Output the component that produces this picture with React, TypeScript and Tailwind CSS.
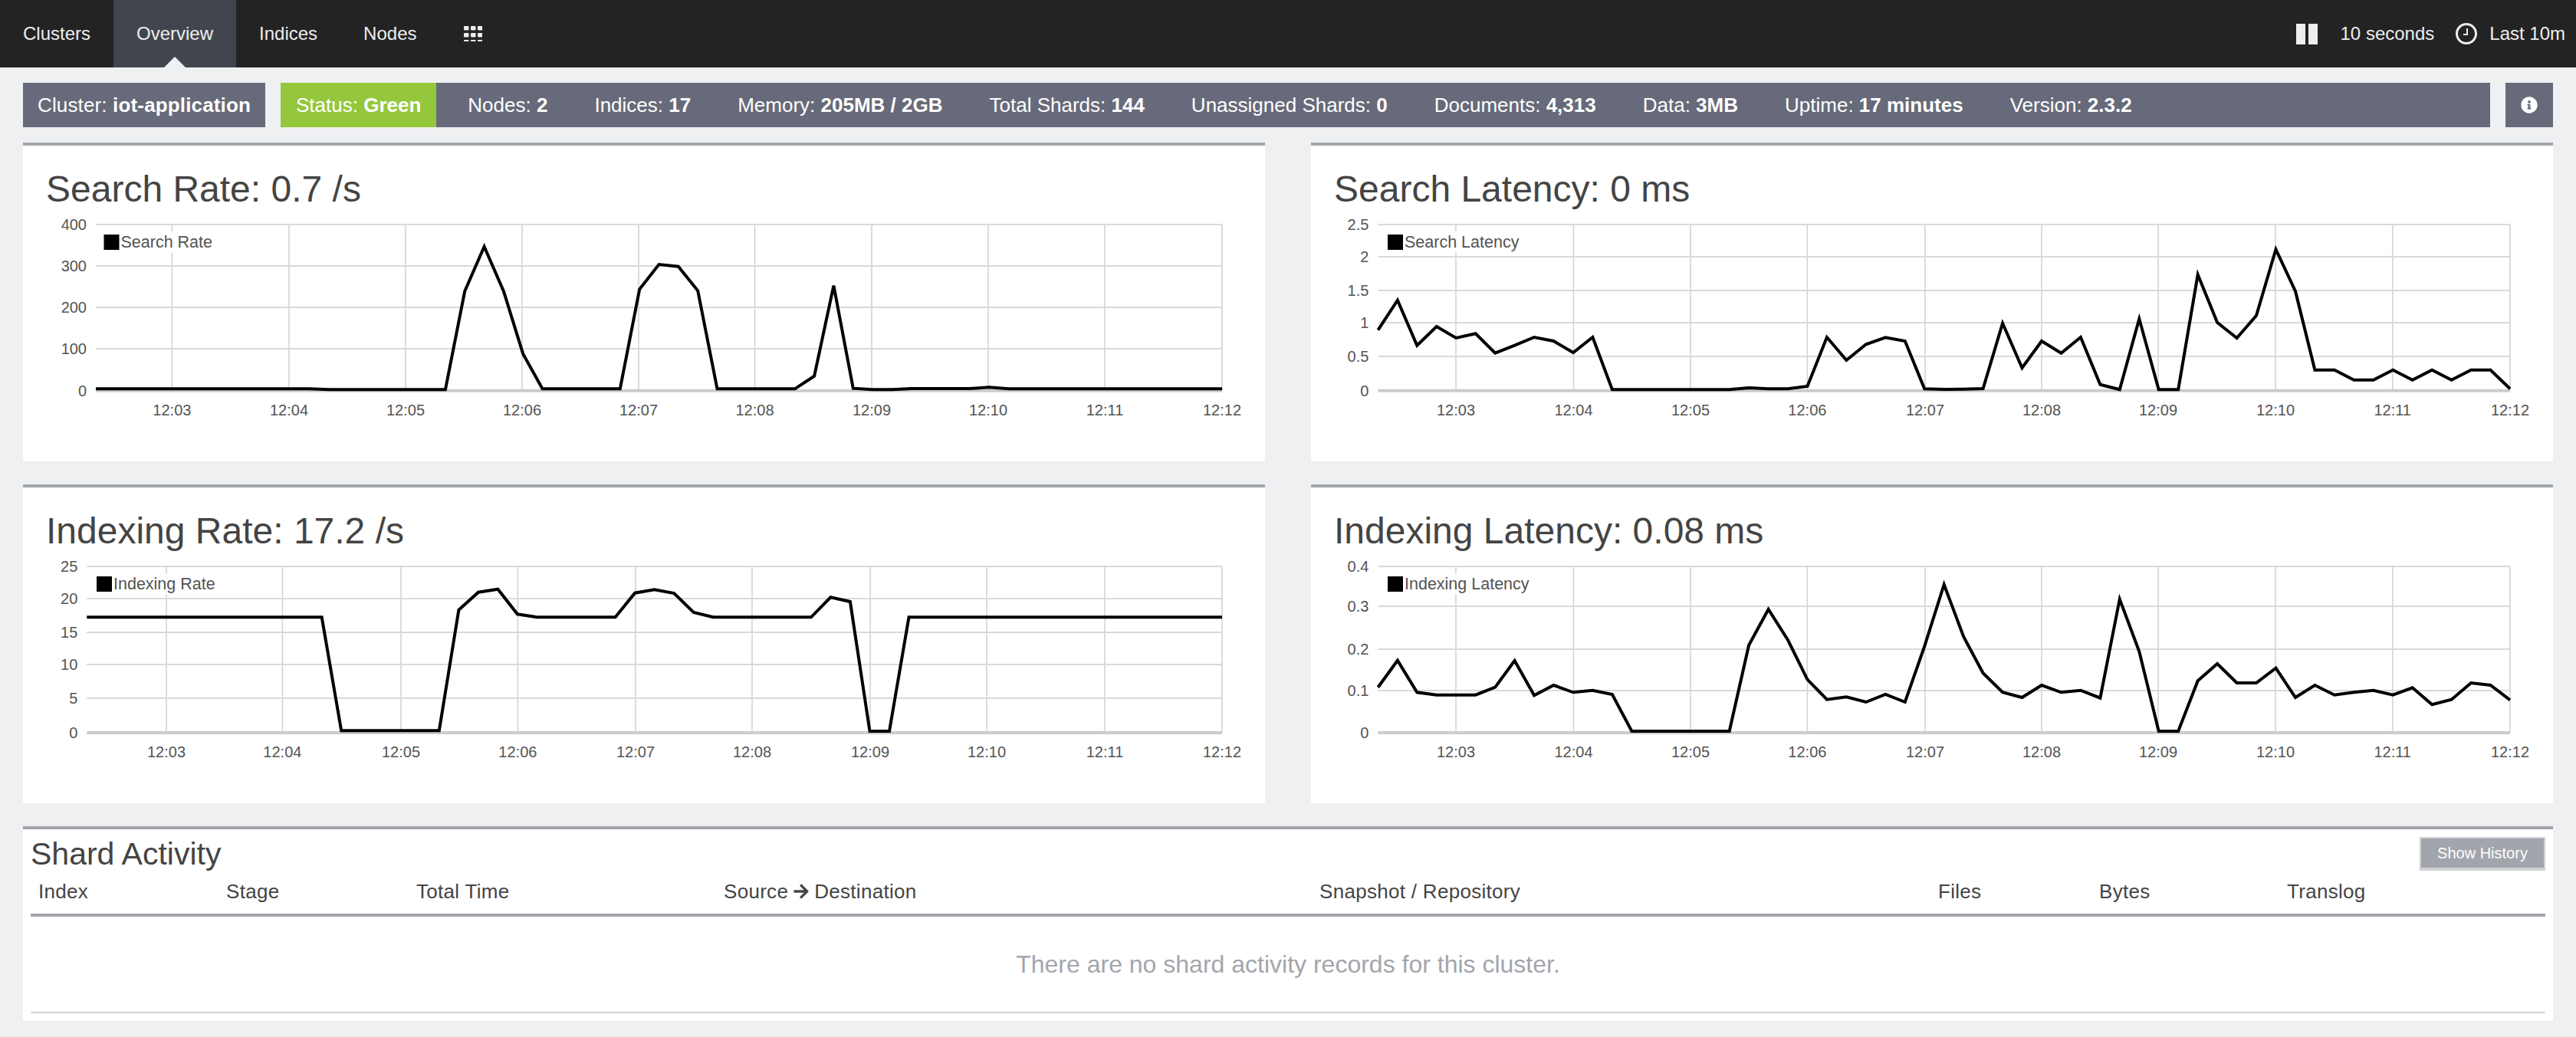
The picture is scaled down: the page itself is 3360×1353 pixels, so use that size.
import React from "react";
import { FaArrowRight, FaInfoCircle } from "react-icons/fa";

type ChartProps = {
  title: string;
  legend: string;
  legendX: number;
  legendWidth: number;
  // raw values are measured in 1/3 px, with rawOffset as the svg's top
  rawOffset: number;
  plotLeft: number;
  ticksX: number[];
  gridY: { label: string; raw: number }[];
  trace: number[];
};

const PLOT_RIGHT = 1564;
const TIME_LABELS = ["12:03", "12:04", "12:05", "12:06", "12:07", "12:08", "12:09", "12:10", "12:11", "12:12"];

const flat = (value: number, count: number) => Array.from({ length: count }, () => value);

const searchRate = [
  ...flat(982, 12), ...flat(985, 7), 600, 425, 600, 845, ...flat(982, 5), 592, 495, 503, 598,
  ...flat(982, 5), 932, 578, 980, 985, 985, 981, 981, 981, 981, 976, ...flat(982, 12),
];

const searchLatency = [
  752, 635, 812, 738, 783, 766, 842, 812, 780, 795, 840, 780, ...flat(985, 7), 978, 982, 982, 972,
  780, 870, 808, 781, 795, 982, 984, 983, 981, 725, 900, 795, 842, 780, 965, 985, 708, 985, 985,
  535, 722, 783, 695, 436, 600, 908, 908, 947, 947, 908, 947, 908, 947, 908, 908, 982,
];

const indexingRate = [
  ...flat(556, 13), ...flat(1000, 6), 527, 458, 446, 544, ...flat(556, 5), 461, 448, 462, 537,
  ...flat(556, 6), 478, 495, 1002, 1002, ...flat(556, 17),
];

const indexingLatency = [
  830, 725, 850, 860, 860, 860, 830, 726, 862, 822, 850, 842, 858, ...flat(1002, 6), 665, 525, 645,
  800, 878, 868, 888, 858, 888, 670, 428, 632, 775, 850, 870, 822, 850, 842, 872, 485, 690, 1002,
  1002, 805, 738, 813, 813, 755, 870, 822, 860, 850, 842, 860, 832, 898, 878, 813, 822, 880,
];

const ticksLeft = [194.4, 347, 499, 651, 803, 954.5, 1107, 1259, 1411, 1564];
const ticksIndexing = [187, 338.4, 493, 645.4, 799, 951, 1105, 1257, 1411, 1564];
const ticksRight = [189, 342.5, 495, 647.4, 801, 953, 1105, 1258, 1410.7, 1564];

function Chart({ title, legend, legendX, legendWidth, rawOffset, plotLeft, ticksX, gridY, trace }: ChartProps) {
  const toY = (raw: number) => raw / 3 - rawOffset;
  const step = (PLOT_RIGHT - plotLeft) / (trace.length - 1);
  const line = trace.map((raw, i) => `${(plotLeft + i * step).toFixed(1)},${toY(raw).toFixed(1)}`).join(" ");
  const top = toY(gridY[0].raw);
  const bottom = toY(gridY[gridY.length - 1].raw);

  return (
    <section className="h-[416px] border-t-4 border-[#a3a5ac] bg-white">
      <h2 className="mb-[6px] pl-[30px] pt-[30px] text-[48px] leading-[54px] text-[#444444]">{title}</h2>
      <svg width="1620" height="322" className="block">
        {ticksX.map((x) => (
          <line key={x} x1={x} x2={x} y1={top} y2={bottom} stroke="#d0d0d0" strokeWidth="1.5" />
        ))}
        {gridY.map((g, i) => (
          <line
            key={g.label}
            x1={plotLeft}
            x2={PLOT_RIGHT}
            y1={toY(g.raw)}
            y2={toY(g.raw)}
            stroke={i === gridY.length - 1 ? "#cccccc" : "#d9d9d9"}
            strokeWidth={i === gridY.length - 1 ? 4 : 2}
          />
        ))}
        {gridY.map((g) => (
          <text key={g.label} x={plotLeft - 12} y={toY(g.raw) + 7} textAnchor="end" className="fill-[#545454] text-[20px]">
            {g.label}
          </text>
        ))}
        {ticksX.map((x, i) => (
          <text key={x} x={x} y={bottom + 32} textAnchor="middle" className="fill-[#545454] text-[20px]">
            {TIME_LABELS[i]}
          </text>
        ))}
        <rect x={legendX - 4} y={22} width={legendWidth + 30} height={28} fill="#ffffff" fillOpacity="0.85" />
        <polyline points={line} fill="none" stroke="#000000" strokeWidth="4" strokeLinejoin="miter" />
        <rect x={legendX} y={26} width={20} height={20} fill="#000000" />
        <text x={legendX + 22} y={43} className="fill-[#545454] text-[21.5px]">
          {legend}
        </text>
      </svg>
    </section>
  );
}

function GridIcon() {
  const cells = [0, 9, 18].flatMap((y) => [0, 9, 18].map((x) => ({ x, y })));
  return (
    <svg width="24" height="20" viewBox="0 0 24 20" className="block">
      {cells.map((c) => (
        <rect key={`${c.x}-${c.y}`} x={c.x} y={c.y} width="6.5" height="5.5" rx="1" fill="#eeeeee" />
      ))}
    </svg>
  );
}

function ClockIcon() {
  return (
    <svg width="28" height="28" viewBox="0 0 28 28" className="block">
      <circle cx="14" cy="14" r="12.5" fill="none" stroke="#eeeeee" strokeWidth="3" />
      <path d="M15 7v8H10" fill="none" stroke="#eeeeee" strokeWidth="2" />
    </svg>
  );
}

function Stat({ label, value }: { label: string; value: string }) {
  return (
    <span className="whitespace-nowrap">
      {label}: <b>{value}</b>
    </span>
  );
}

const stats = [
  ["Nodes", "2"],
  ["Indices", "17"],
  ["Memory", "205MB / 2GB"],
  ["Total Shards", "144"],
  ["Unassigned Shards", "0"],
  ["Documents", "4,313"],
  ["Data", "3MB"],
  ["Uptime", "17 minutes"],
  ["Version", "2.3.2"],
];

const columns = ["Index", "Stage", "Total Time", "Source", "Snapshot / Repository", "Files", "Bytes", "Translog"];

export default function App() {
  return (
    <div className="min-h-[1353px] w-full bg-[#eff0f2] font-['Liberation_Sans',Arial,sans-serif]">
      {/* Top navigation */}
      <nav className="flex h-[88px] items-center justify-between bg-[#232323] text-[24px] text-[#eeeeee]">
        <div className="flex h-full items-center">
          <a className="px-[30px]">Clusters</a>
          <a className="relative flex h-full items-center bg-[#41464e] px-[30px]">
            Overview
            <span className="absolute bottom-0 left-1/2 h-0 w-0 -translate-x-1/2 border-x-[14px] border-b-[14px] border-x-transparent border-b-[#eff0f2]" />
          </a>
          <a className="px-[30px]">Indices</a>
          <a className="px-[30px]">Nodes</a>
          <a className="px-[32px]">
            <GridIcon />
          </a>
        </div>
        <div className="flex items-center pr-[14px]">
          <div className="mr-[30px] flex gap-[4px]">
            <span className="h-[27px] w-[12px] bg-[#eeeeee]" />
            <span className="h-[27px] w-[12px] bg-[#eeeeee]" />
          </div>
          <span className="mr-[28px]">10 seconds</span>
          <span className="mr-[16px]">
            <ClockIcon />
          </span>
          <span>Last 10m</span>
        </div>
      </nav>

      <main className="px-[30px]">
        {/* Cluster status bar */}
        <div className="flex h-[78px] items-end text-[26px] text-white">
          <div className="flex h-[58px] w-[316px] items-center justify-center bg-[#676a7a] tracking-[0.15px]">
            <Stat label="Cluster" value="iot-application" />
          </div>
          <div className="ml-[20px] flex h-[58px] flex-1 items-center gap-[61px] bg-[#676a7a]">
            <div className="-mr-[20px] flex h-full items-center bg-[#95c73d] px-[20px]">
              <Stat label="Status" value="Green" />
            </div>
            {stats.map(([label, value]) => (
              <Stat key={label} label={label} value={value} />
            ))}
          </div>
          <div className="ml-[20px] flex h-[58px] w-[62px] items-center justify-center bg-[#676a7a]">
            <FaInfoCircle size={22} />
          </div>
        </div>

        {/* Charts */}
        <div className="mt-[20px] grid grid-cols-2 gap-x-[60px] gap-y-[30px]">
          <Chart
            title="Search Rate: 0.7 /s"
            legend="Search Rate"
            legendX={105.5}
            legendWidth={120}
            rawOffset={100}
            plotLeft={95}
            ticksX={ticksLeft}
            gridY={[
              { label: "400", raw: 339 },
              { label: "300", raw: 501 },
              { label: "200", raw: 663 },
              { label: "100", raw: 825 },
              { label: "0", raw: 989 },
            ]}
            trace={searchRate}
          />
          <Chart
            title="Search Latency: 0 ms"
            legend="Search Latency"
            legendX={100}
            legendWidth={150}
            rawOffset={100}
            plotLeft={87.4}
            ticksX={ticksRight}
            gridY={[
              { label: "2.5", raw: 339 },
              { label: "2", raw: 465 },
              { label: "1.5", raw: 597 },
              { label: "1", raw: 723 },
              { label: "0.5", raw: 855 },
              { label: "0", raw: 989 },
            ]}
            trace={searchLatency}
          />
          <Chart
            title="Indexing Rate: 17.2 /s"
            legend="Indexing Rate"
            legendX={96}
            legendWidth={132}
            rawOffset={106}
            plotLeft={83.3}
            ticksX={ticksIndexing}
            gridY={[
              { label: "25", raw: 357 },
              { label: "20", raw: 483 },
              { label: "15", raw: 615 },
              { label: "10", raw: 741 },
              { label: "5", raw: 873 },
              { label: "0", raw: 1008 },
            ]}
            trace={indexingRate}
          />
          <Chart
            title="Indexing Latency: 0.08 ms"
            legend="Indexing Latency"
            legendX={100}
            legendWidth={166}
            rawOffset={106}
            plotLeft={87.4}
            ticksX={ticksRight}
            gridY={[
              { label: "0.4", raw: 357 },
              { label: "0.3", raw: 513 },
              { label: "0.2", raw: 681 },
              { label: "0.1", raw: 843 },
              { label: "0", raw: 1008 },
            ]}
            trace={indexingLatency}
          />
        </div>

        {/* Shard activity */}
        <section className="mt-[30px] h-[254px] border-t-4 border-[#a3a5ac] bg-white px-[10px]">
          <div className="flex h-[52px] items-start justify-between">
            <h2 className="mt-[7px] text-[41px] leading-[50px] text-[#444444]">Shard Activity</h2>
            <button className="mt-[10px] h-[44px] w-[164px] border-2 border-b-4 border-[#cfd1d5] bg-[#a3a5ac] text-[20px] text-white">
              Show History
            </button>
          </div>
          <div className="grid h-[62px] grid-cols-[245px_248px_401px_777px_807px_210px_245px_347px] items-center border-b-4 border-[#a3a5ac] text-[26px] tracking-[0.3px] text-[#444444]">
            {columns.map((col) => (
              <span key={col} className="flex items-center pl-[10px]">
                {col}
                {col === "Source" && (
                  <>
                    <FaArrowRight size={22} className="mx-[6px]" />
                    Destination
                  </>
                )}
              </span>
            ))}
          </div>
          <div className="flex h-[126px] items-center justify-center border-b-2 border-[#d3d4d8] text-[32px] text-[#a3a5ac]">
            There are no shard activity records for this cluster.
          </div>
        </section>
      </main>
    </div>
  );
}
